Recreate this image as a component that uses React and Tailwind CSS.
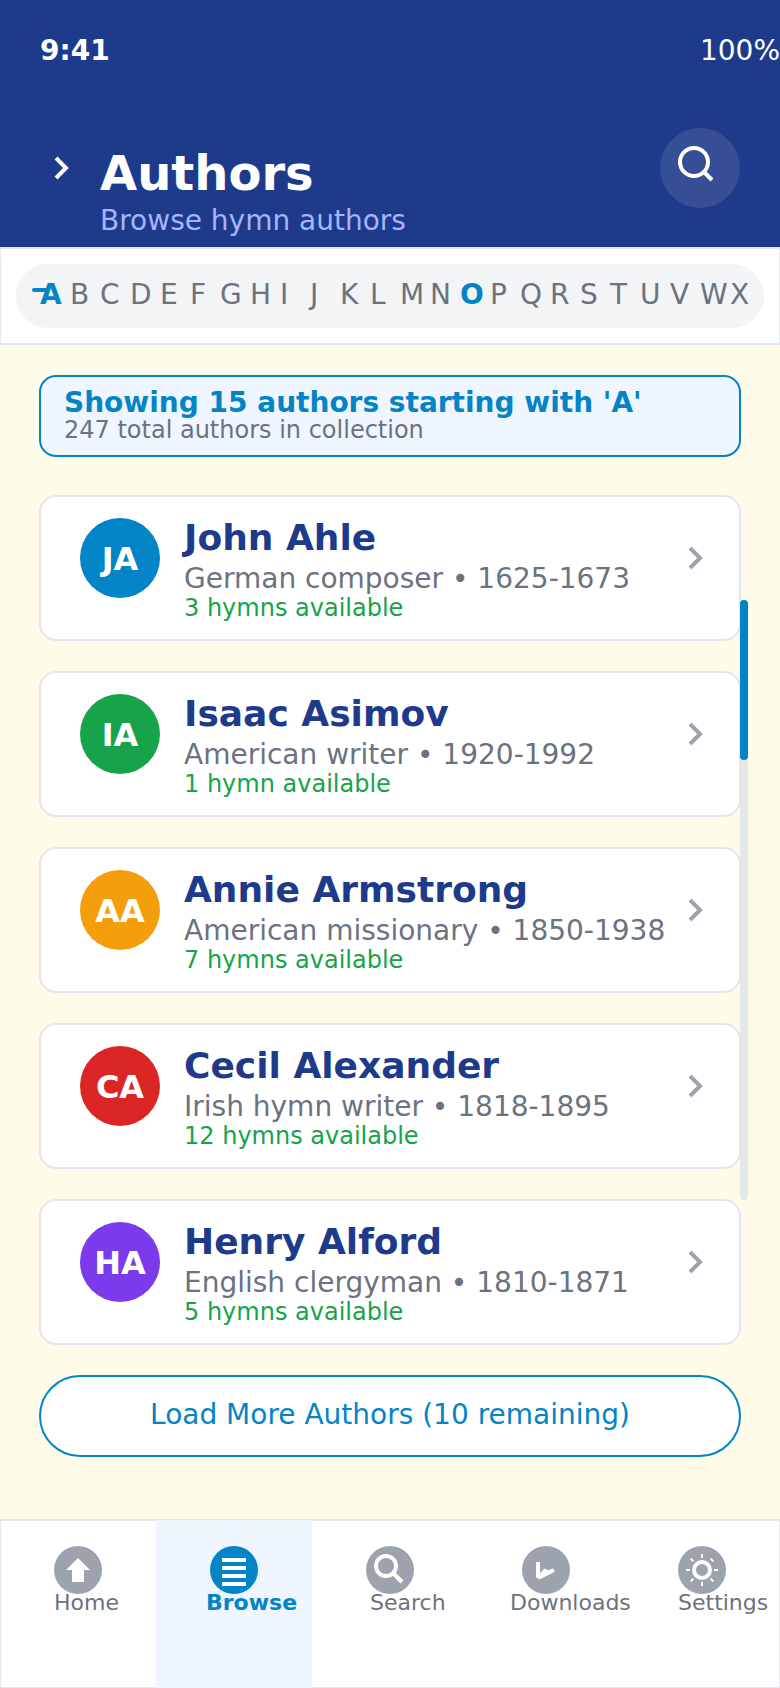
const AUTHORS = [
  { initials: 'JA', name: 'John Ahle', role: 'German composer • 1625-1673', hymns: '3 hymns available', color: 'bg-[#0284c7]' },
  { initials: 'IA', name: 'Isaac Asimov', role: 'American writer • 1920-1992', hymns: '1 hymn available', color: 'bg-[#16a34a]' },
  { initials: 'AA', name: 'Annie Armstrong', role: 'American missionary • 1850-1938', hymns: '7 hymns available', color: 'bg-[#f59e0b]' },
  { initials: 'CA', name: 'Cecil Alexander', role: 'Irish hymn writer • 1818-1895', hymns: '12 hymns available', color: 'bg-[#dc2626]' },
  { initials: 'HA', name: 'Henry Alford', role: 'English clergyman • 1810-1871', hymns: '5 hymns available', color: 'bg-[#7c3aed]' },
];

const LETTERS = 'ABCDEFGHIJKLMNOPQRSTUVWX'.split('');

const HomeIcon = () => <path d="M24 12L12 24h6v12h12V24h6z" fill="#fff" />;

const BrowseIcon = () => <path d="M12 12h24v4H12zM12 20h24v4H12zM12 28h24v4H12zM12 36h24v4H12z" fill="#fff" />;

const SearchIcon = () => (
  <g fill="none" stroke="#fff" strokeWidth="4">
    <circle cx="20" cy="20" r="10" />
    <path d="M28 28l8 8" />
  </g>
);

const DownloadsIcon = () => (
  <g>
    <path d="M16 16v16M16 32l8-8M16 32l16-8" fill="none" stroke="#fff" strokeWidth="4" />
    <path d="M23 22.4L25.6 24.2L28 23.8L28 27L22 28z" fill="#fff" />
  </g>
);

const SettingsIcon = () => (
  <g fill="none" stroke="#fff">
    <circle cx="24" cy="24" r="8" strokeWidth="4" />
    <path d="M24 8v4M24 36v4M8 24h4M36 24h4M12.6 12.6l2.8 2.8M32.6 32.6l2.8 2.8M12.6 35.4l2.8-2.8M32.6 12.6l2.8 2.8" strokeWidth="2" />
  </g>
);

const TABS = [
  { label: 'Home', Icon: HomeIcon, pad: 'pl-[54px]' },
  { label: 'Browse', Icon: BrowseIcon, pad: 'pl-[50px]', active: true },
  { label: 'Search', Icon: SearchIcon, pad: 'pl-[58px]' },
  { label: 'Downloads', Icon: DownloadsIcon, pad: 'pl-[42px]' },
  { label: 'Settings', Icon: SettingsIcon, pad: 'pl-[54px]' },
];

function Chevron({ className }) {
  return (
    <svg className={className} width="16" height="24" viewBox="0 0 16 24" fill="none" stroke="currentColor" strokeWidth="4">
      <path d="M2 2l10 10L2 22" />
    </svg>
  );
}

function Header() {
  return (
    <header className="h-[247px] bg-[#1e3a8a] text-white">
      <div className="flex justify-between pl-10 pt-[35px] text-[28px] leading-8">
        <span className="font-bold">9:41</span>
        <span>100%</span>
      </div>
      <div className="flex pt-[61px]">
        <Chevron className="ml-[54px] mt-7 shrink-0" />
        <div className="ml-[30px] mt-[17px] flex-1">
          <h1 className="text-[48px] font-bold leading-[56px]">Authors</h1>
          <p className="mt-1 text-[28px] leading-8 text-[#a5b4fc]">Browse hymn authors</p>
        </div>
        <button className="mr-10 size-20 rounded-full bg-white/10">
          <svg width="80" height="80" viewBox="0 0 80 80" fill="none" stroke="#fff" strokeWidth="4">
            <circle cx="34" cy="34" r="14" />
            <path d="M44 44l8 8" />
          </svg>
        </button>
      </div>
    </header>
  );
}

function AlphabetBar() {
  return (
    <div className="h-[98px] border-x border-y-2 border-[#e5e7eb] bg-white px-[15px] pt-[15px]">
      <div className="relative flex h-16 rounded-[32px] bg-[#f3f4f6] pl-6 pt-[15px] text-[28px] leading-8">
        <span className="absolute left-4 top-6 h-1 w-4 rounded-sm bg-[#0284c7]" />
        {LETTERS.map((l) => (
          <span
            key={l}
            className={l === 'A' || l === 'O' ? 'w-[30px] shrink-0 font-bold text-[#0284c7]' : 'w-[30px] shrink-0 text-[#6b7280]'}
          >
            {l}
          </span>
        ))}
      </div>
    </div>
  );
}

function AuthorCard({ author }) {
  return (
    <article className="flex h-[146px] rounded-[17px] border-2 border-[#e5e7eb] bg-white pl-[39px]">
      <div className={`${author.color} mt-[21px] flex size-20 shrink-0 justify-center rounded-full pt-[22px] text-[32px] font-bold leading-[38px] text-white`}>
        {author.initials}
      </div>
      <div className="ml-6 flex-1 whitespace-nowrap pt-5">
        <h2 className="text-[36px] font-bold leading-[42px] text-[#1e3a8a]">{author.name}</h2>
        <p className="mt-1 text-[28px] leading-8 text-[#6b7280]">{author.role}</p>
        <p className="-mt-px text-[24px] leading-7 text-[#16a34a]">{author.hymns}</p>
      </div>
      <Chevron className="mr-[35px] mt-[49px] shrink-0 text-[#9ca3af]" />
    </article>
  );
}

function TabBar() {
  return (
    <nav className="h-[169px] border-x border-b border-t-2 border-[#e5e7eb] bg-white">
      <div className="-mx-px -mt-px flex h-[168px]">
        {TABS.map(({ label, Icon, pad, active }) => (
          <div key={label} className={active ? 'h-[168px] w-[156px] bg-[#eff6ff] pt-[26px]' : 'w-[156px] pt-[26px]'}>
            <svg
              className={active ? 'ml-[54px] block rounded-full bg-[#0284c7]' : 'ml-[54px] block rounded-full bg-[#9ca3af]'}
              width="48"
              height="48"
              viewBox="0 0 48 48"
            >
              <Icon />
            </svg>
            <div className={`${pad} ${active ? 'font-bold text-[#0284c7]' : 'text-[#6b7280]'} -mt-1 text-[22px] leading-[26px]`}>{label}</div>
          </div>
        ))}
      </div>
    </nav>
  );
}

export default function App() {
  return (
    <div className="flex h-[1688px] w-[780px] flex-col overflow-hidden bg-[#fefce8] font-['DejaVu_Sans',sans-serif]">
      <Header />
      <AlphabetBar />
      <main className="relative flex-1 px-[39px] pt-[30px]">
        <section className="h-[82px] rounded-[17px] border-2 border-[#0284c7] bg-[#eff6ff] pl-[23px] pt-2.5">
          <p className="text-[28px] font-bold leading-8 text-[#0284c7]">Showing 15 authors starting with 'A'</p>
          <p className="-mt-[3px] text-[24px] leading-7 text-[#6b7280]">247 total authors in collection</p>
        </section>
        <div className="mt-[38px] flex flex-col gap-[30px]">
          {AUTHORS.map((a) => (
            <AuthorCard key={a.initials} author={a} />
          ))}
          <button className="h-[82px] rounded-full border-2 border-[#0284c7] bg-white pb-0.5 text-[28px] leading-8 text-[#0284c7]">
            Load More Authors (10 remaining)
          </button>
        </div>
        <div className="absolute left-[740px] top-[255px] h-[600px] w-2 rounded bg-[#e5e7eb]">
          <div className="h-40 rounded bg-[#0284c7]" />
        </div>
      </main>
      <TabBar />
    </div>
  );
}
